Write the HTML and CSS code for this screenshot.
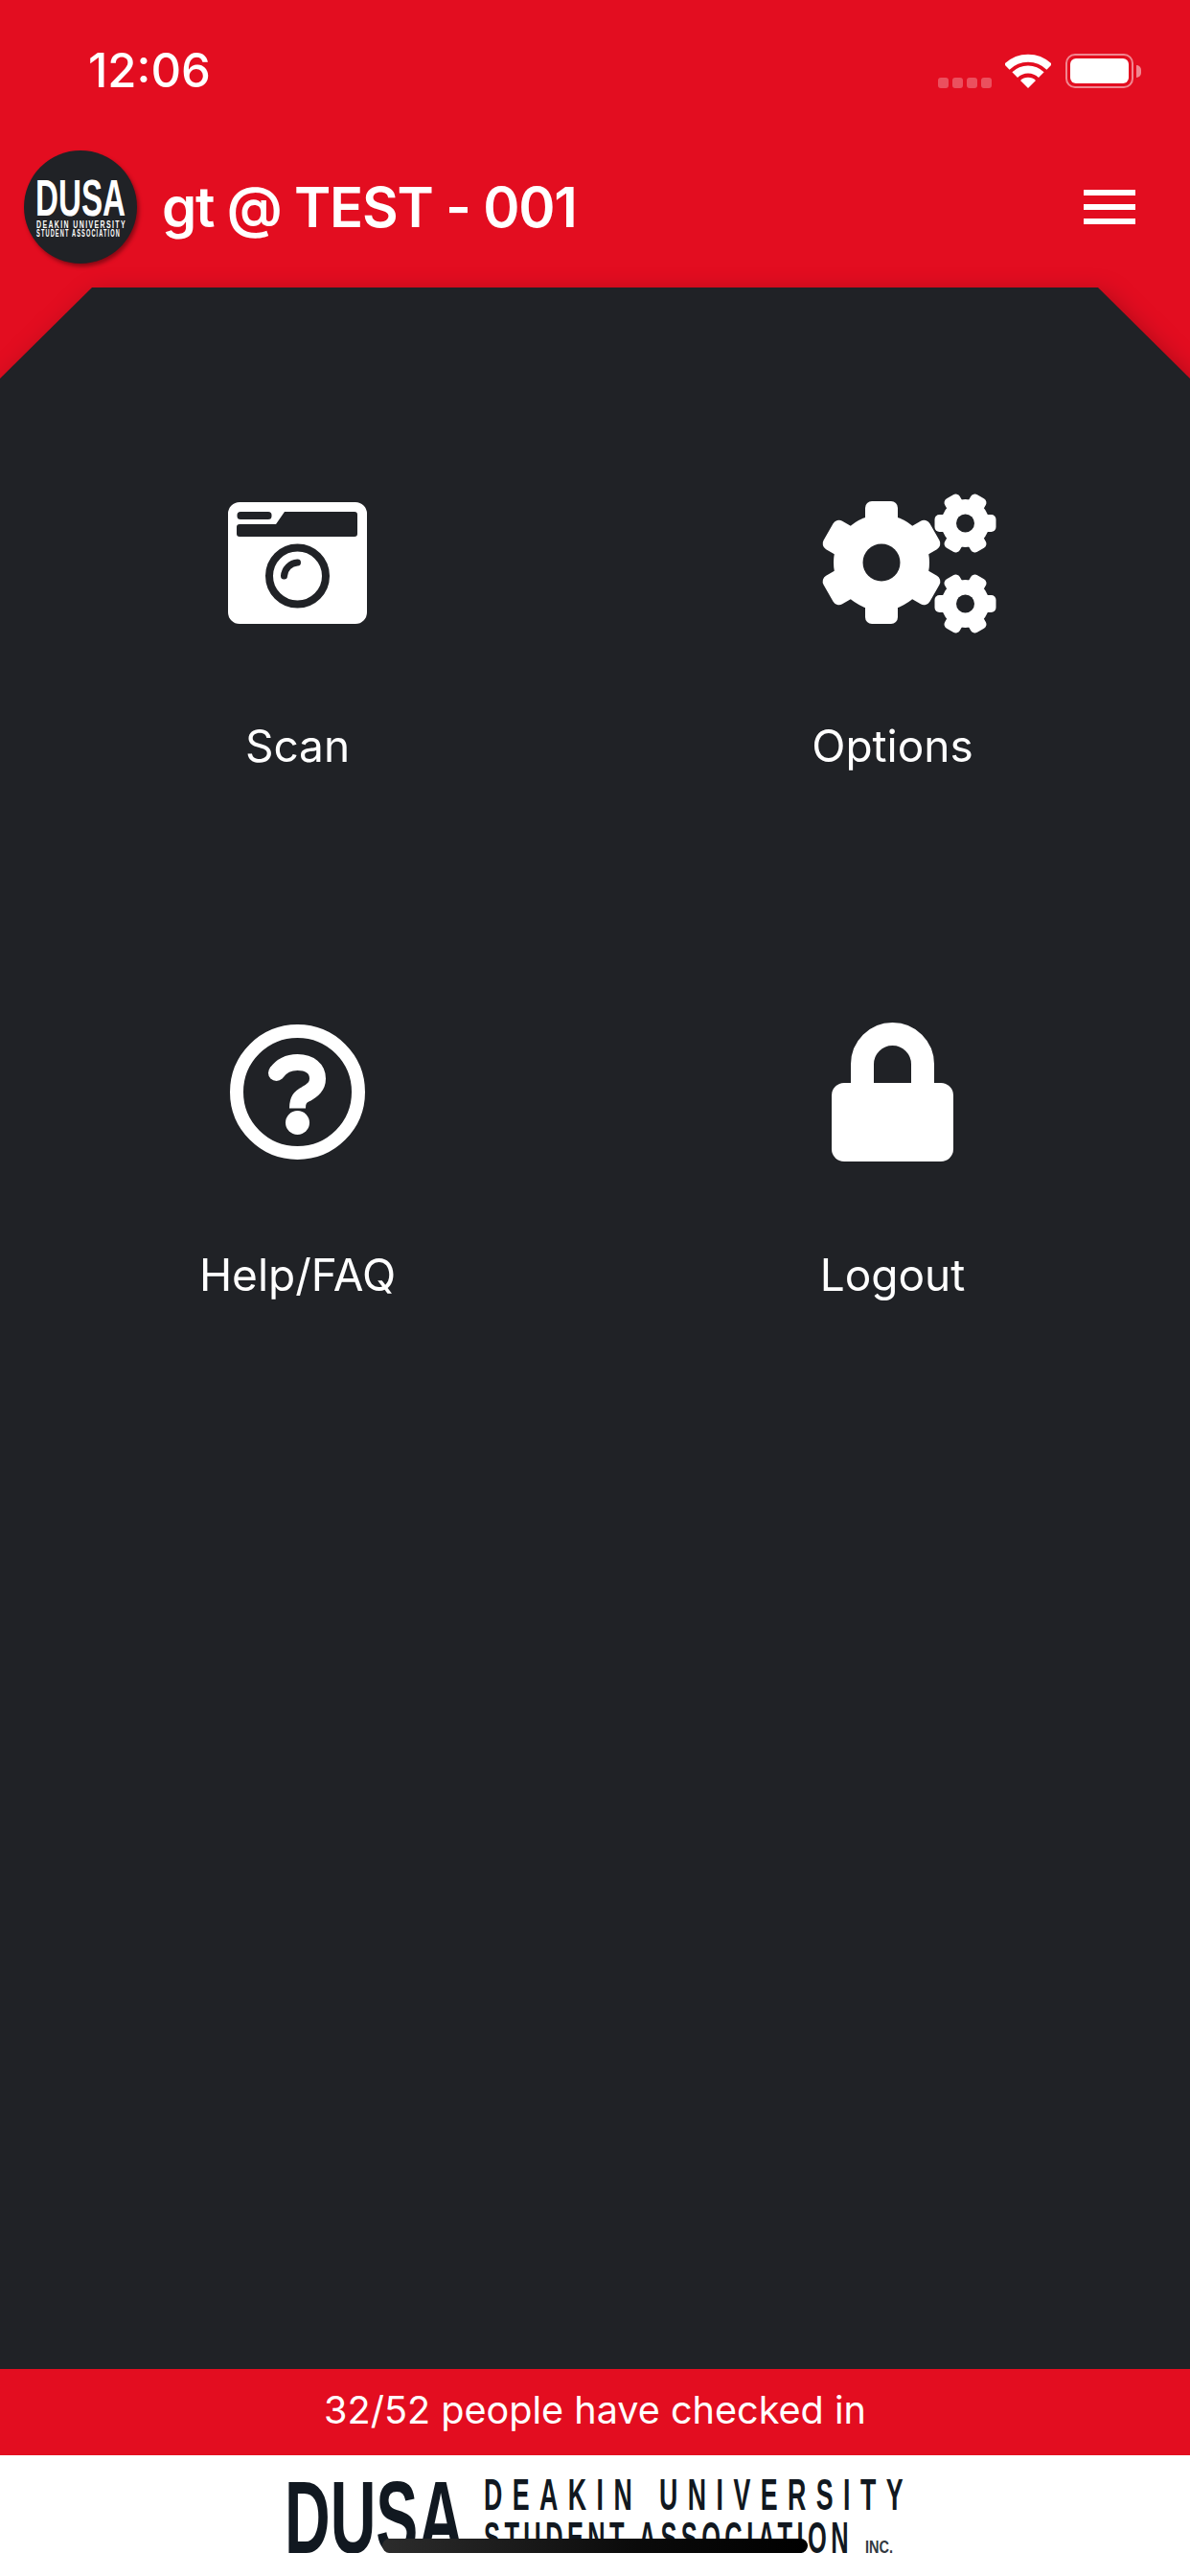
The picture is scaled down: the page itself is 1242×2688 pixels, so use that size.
FILE: index.html
```html
<!DOCTYPE html>
<html lang="en">
<head>
<meta charset="utf-8">
<title>DUSA</title>
<link rel="stylesheet" href="styles.css">
</head>
<body>
<div class="page">
  <header class="header">
    <div class="status">
      <span class="time">12:06</span>
      <div class="status-icons">
        <div class="signal"><i></i><i></i><i></i><i></i></div>
        <svg class="wifi" width="48" height="36" viewBox="0 0 48 36">
          <path class="wifi-arc" d="M1.8 13.8A31.5 31.5 0 0 1 46.2 13.8"/>
          <path class="wifi-arc" d="M10.2 22.2A19.5 19.5 0 0 1 37.8 22.2"/>
          <path class="wifi-dot" d="M24 36L16 28A11.3 11.3 0 0 1 32 28Z"/>
        </svg>
        <div class="battery"><div class="battery-fill"></div></div>
        <div class="battery-nub"></div>
      </div>
    </div>
    <div class="appbar">
      <div class="badge">
        <svg width="118" height="118" viewBox="0 0 118 118">
          <text class="badge-big" x="12" y="68" textLength="94" lengthAdjust="spacingAndGlyphs">DUSA</text>
          <text class="badge-small" x="13" y="81" textLength="94" lengthAdjust="spacingAndGlyphs">DEAKIN UNIVERSITY</text>
          <text class="badge-small" x="13" y="90" textLength="88" lengthAdjust="spacingAndGlyphs">STUDENT ASSOCIATION</text>
        </svg>
      </div>
      <h1 class="title">gt @ TEST - 001</h1>
      <div class="menu"><span></span><span></span><span></span></div>
    </div>
  </header>

  <main class="stage">
    <div class="panel-shadow">
      <div class="panel">
        <nav class="grid">
          <a class="tile">
            <div class="tile-icon">
              <svg width="145" height="127" viewBox="0 0 145 127">
                <path class="fill" fill-rule="evenodd" d="M12 0H133A12 12 0 0 1 145 12V115A12 12 0 0 1 133 127H12A12 12 0 0 1 0 115V12A12 12 0 0 1 12 0ZM13 10H42A3.5 3.5 0 0 1 45.500 13.500V14.500A3.500 3.500 0 0 1 42 18H13A3.500 3.500 0 0 1 9.500 14.500V13.500A3.500 3.500 0 0 1 13 10ZM59 10H132A3 3 0 0 1 135 13V33A3 3 0 0 1 132 36H12A3 3 0 0 1 9 33V26A3 3 0 0 1 12 23H50Z"/>
                <circle class="lens" cx="72.500" cy="77" r="29.500"/>
                <path class="lens-glint" d="M58.500 77A15 15 0 0 1 72.500 63"/>
              </svg>
            </div>
            <span class="label">Scan</span>
          </a>
          <a class="tile">
            <div class="tile-icon">
              <svg width="263" height="150" viewBox="-120 -75 263 150">
                <defs>
                  <g id="big-gear">
                    <circle class="fill" r="50"/>
                    <rect class="fill" x="-17" y="-64" width="34" height="128" rx="7"/>
                    <rect class="fill" x="-17" y="-64" width="34" height="128" rx="7" transform="rotate(60)"/>
                    <rect class="fill" x="-17" y="-64" width="34" height="128" rx="7" transform="rotate(120)"/>
                    <circle class="hole" r="19.500"/>
                  </g>
                  <g id="small-gear">
                    <circle class="fill" r="25"/>
                    <rect class="fill" x="-32" y="-9" width="64" height="18" rx="5"/>
                    <rect class="fill" x="-32" y="-9" width="64" height="18" rx="5" transform="rotate(60)"/>
                    <rect class="fill" x="-32" y="-9" width="64" height="18" rx="5" transform="rotate(120)"/>
                    <circle class="hole" r="9.500"/>
                  </g>
                </defs>
                <use href="#big-gear"/>
                <use href="#small-gear" x="87.500" y="-41"/>
                <use href="#small-gear" x="87.500" y="43"/>
              </svg>
            </div>
            <span class="label">Options</span>
          </a>
          <a class="tile">
            <div class="tile-icon">
              <svg width="141" height="141" viewBox="-70.500 -70.500 141 141">
                <circle class="ring" r="63.500"/>
                <path class="q-stroke" d="M-22 -20C-17 -27 -9 -31 0 -31C13 -31 21 -24 21 -14C21 -6 16 -2 9 2C3 5 0 8 0 17"/>
                <circle class="fill" cx="-22" cy="-20" r="8.500"/>
                <circle class="fill" cy="32" r="12.500"/>
              </svg>
            </div>
            <span class="label">Help/FAQ</span>
          </a>
          <a class="tile">
            <div class="tile-icon">
              <svg width="127" height="145" viewBox="0 0 127 145">
                <path class="shackle" d="M32 70V43.500A31.500 31.500 0 0 1 95 43.500V70"/>
                <rect class="fill" y="63" width="127" height="82" rx="13"/>
              </svg>
            </div>
            <span class="label">Logout</span>
          </a>
        </nav>
      </div>
    </div>
  </main>

  <footer class="footer">
    <div class="checkin">32/52 people have checked in</div>
    <div class="brand">
      <svg width="660" height="78" viewBox="0 0 660 78">
        <text class="brand-big" x="-3" y="78" textLength="187" lengthAdjust="spacingAndGlyphs">DUSA</text>
        <text class="brand-line" x="205" y="33" textLength="448" lengthAdjust="spacingAndGlyphs">DEAKIN UNIVERSITY</text>
        <text class="brand-line brand-line-tight" x="205" y="78" textLength="385" lengthAdjust="spacingAndGlyphs">STUDENT ASSOCIATION</text>
        <text class="brand-inc" x="603" y="78" textLength="29" lengthAdjust="spacingAndGlyphs">INC.</text>
      </svg>
    </div>
    <div class="home-indicator"></div>
  </footer>
</div>
</body>
</html>
```
FILE: styles.css
```css
* { box-sizing: border-box; }
html, body { margin: 0; padding: 0; }
body { font-family: "Inter", "Liberation Sans", sans-serif; color: #fff; background: #fff; }

.page { width: 1242px; height: 2688px; display: flex; flex-direction: column; overflow: hidden; }

/* Header */
.header { height: 300px; background: #e30d20; display: flex; flex-direction: column; flex: none; position: relative; z-index: 0; }
.status { height: 132px; display: flex; justify-content: space-between; align-items: flex-start; padding: 50px 51px 0 92px; }
.time { font-size: 49px; line-height: 48px; font-weight: 500; }
.status-icons { display: flex; align-items: flex-start; padding-top: 6px; }
.signal { display: flex; gap: 4px; margin-top: 25px; margin-right: 14px; }
.signal i { display: block; width: 11px; height: 11px; border-radius: 3px; background: rgba(255,255,255,.28); }
.wifi { margin-right: 15px; }
.wifi-arc { fill: none; stroke: #fff; stroke-width: 8; }
.wifi-dot { fill: #fff; }
.battery { width: 71px; height: 36px; border: 2px solid rgba(255,255,255,.5); border-radius: 10px; padding: 3px; }
.battery-fill { width: 100%; height: 100%; background: #fff; border-radius: 6px; }
.battery-nub { width: 5px; height: 13px; margin-top: 12px; margin-left: 3px; background: rgba(255,255,255,.5); border-radius: 0 6px 6px 0; }

.appbar { height: 168px; display: flex; align-items: center; padding: 0 57px 0 25px; }
.badge { width: 118px; height: 118px; border-radius: 50%; background: #202226; box-shadow: 2px 3px 4px rgba(0,0,0,.4); flex: none; }
.badge svg { display: block; }
.badge-big { font-family: "Liberation Sans", sans-serif; font-weight: 700; font-size: 54px; fill: #fff; }
.badge-small { font-family: "Liberation Sans", sans-serif; font-weight: 700; font-size: 10px; letter-spacing: 2px; fill: #fff; }
.title { margin: 0 0 0 26px; flex: 1; font-size: 58px; line-height: 70px; font-weight: 600; letter-spacing: -1.2px; white-space: nowrap; }
.menu { display: flex; flex-direction: column; gap: 9px; width: 54px; flex: none; }
.menu span { display: block; height: 6px; background: #fff; }

/* Main panel */
.stage { flex: 1; background: #e30d20; min-height: 0; display: flex; flex-direction: column; }
.panel-shadow { flex: 1; display: flex; flex-direction: column; filter: drop-shadow(5px 6px 12px rgba(0,0,0,.25)); }
.panel { flex: 1; background: #202226; clip-path: polygon(96px 0, 1146px 0, 1242px 95px, 1242px 100%, 0 100%, 0 95px); }
.grid { display: grid; grid-template-columns: 621px 621px; grid-auto-rows: 552px; padding-top: 207px; }
.tile { display: flex; flex-direction: column; align-items: center; }
.tile-icon { height: 160px; display: flex; align-items: center; justify-content: center; }
.tile-icon svg { display: block; }
.label { margin-top: 83px; font-size: 46px; line-height: 56px; font-weight: 400; white-space: nowrap; }

.fill { fill: #fff; }
.hole { fill: #202226; }
.lens { fill: #fff; stroke: #202226; stroke-width: 8; }
.lens-glint { fill: none; stroke: #202226; stroke-width: 7; stroke-linecap: round; }
.ring { fill: none; stroke: #fff; stroke-width: 14; }
.q-stroke { fill: none; stroke: #fff; stroke-width: 17; }
.shackle { fill: none; stroke: #fff; stroke-width: 24; }

/* Footer */
.footer { flex: none; height: 216px; display: flex; flex-direction: column; position: relative; }
.checkin { height: 90px; padding-bottom: 4px; background: #e30d20; display: flex; align-items: center; justify-content: center; font-size: 39.6px; white-space: nowrap; }
.brand { flex: 1; background: #fff; padding: 24px 0 0 300px; }
.brand svg { display: block; }
.brand-big { font-family: "Liberation Sans", sans-serif; font-weight: 700; font-size: 108px; fill: #111820; }
.brand-line { font-family: "Liberation Sans", sans-serif; font-size: 46px; font-weight: 700; letter-spacing: 18px; fill: #111820; }
.brand-line-tight { letter-spacing: 8px; }
.brand-inc { font-family: "Liberation Sans", sans-serif; font-size: 19px; font-weight: 700; fill: #333a42; }
.home-indicator { position: absolute; left: 399px; top: 177px; width: 444px; height: 15px; border-radius: 8px; background: linear-gradient(90deg, #2c2c2c, #0a0a0a 60%, #000); }
```
